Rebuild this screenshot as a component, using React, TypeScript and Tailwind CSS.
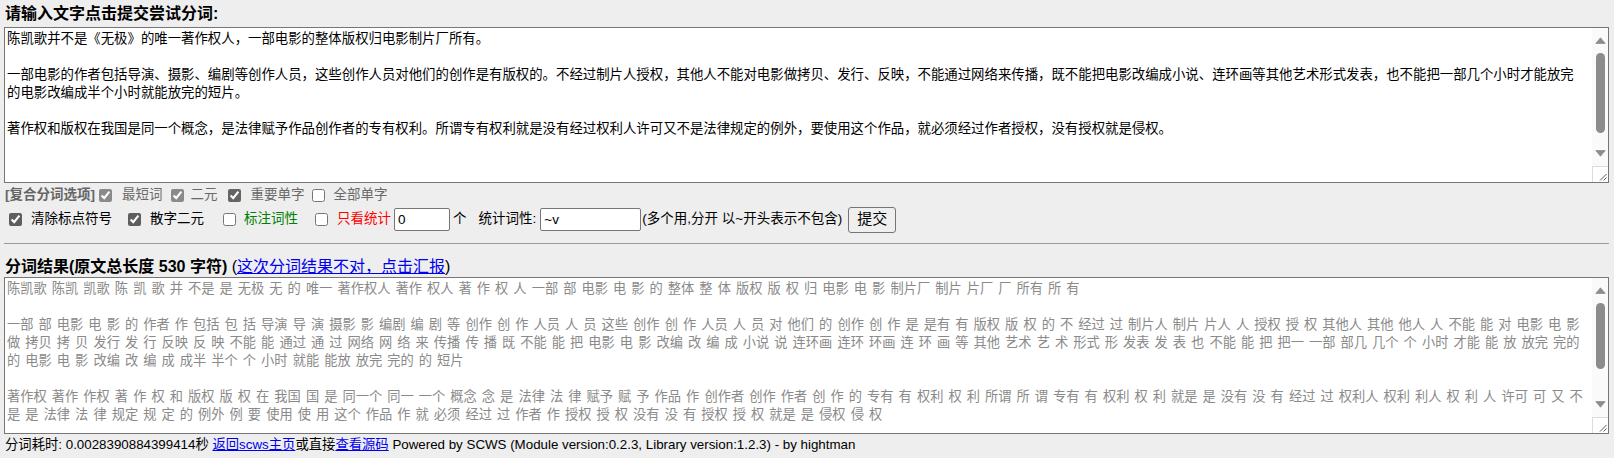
const sourceText =
    '陈凯歌并不是《无极》的唯一著作权人，一部电影的整体版权归电影制片厂所有。\n\n' +
    '一部电影的作者包括导演、摄影、编剧等创作人员，这些创作人员对他们的创作是有版权的。不经过制片人授权，其他人不能对电影做拷贝、发行、反映，不能通过网络来传播，既不能把电影改编成小说、连环画等其他艺术形式发表，也不能把一部几个小时才能放完\n' +
    '的电影改编成半个小时就能放完的短片。\n\n' +
    '著作权和版权在我国是同一个概念，是法律赋予作品创作者的专有权利。所谓专有权利就是没有经过权利人许可又不是法律规定的例外，要使用这个作品，就必须经过作者授权，没有授权就是侵权。';

const resultLines = [
    '陈凯歌 陈凯 凯歌 陈 凯 歌 并 不是 是 无极 无 的 唯一 著作权人 著作 权人 著 作 权 人 一部 部 电影 电 影 的 整体 整 体 版权 版 权 归 电影 电 影 制片厂 制片 片厂 厂 所有 所 有',
    '',
    '一部 部 电影 电 影 的 作者 作 包括 包 括 导演 导 演 摄影 影 编剧 编 剧 等 创作 创 作 人员 人 员 这些 创作 创 作 人员 人 员 对 他们 的 创作 创 作 是 是有 有 版权 版 权 的 不 经过 过 制片人 制片 片人 人 授权 授 权 其他人 其他 他人 人 不能 能 对 电影 电 影',
    '做 拷贝 拷 贝 发行 发 行 反映 反 映 不能 能 通过 通 过 网络 网 络 来 传播 传 播 既 不能 能 把 电影 电 影 改编 改 编 成 小说 说 连环画 连环 环画 连 环 画 等 其他 艺术 艺 术 形式 形 发表 发 表 也 不能 能 把 把一 一部 部几 几个 个 小时 才能 能 放 放完 完的',
    '的 电影 电 影 改编 改 编 成 成半 半个 个 小时 就能 能放 放完 完的 的 短片',
    '',
    '著作权 著作 作权 著 作 权 和 版权 版 权 在 我国 国 是 同一个 同一 一个 概念 念 是 法律 法 律 赋予 赋 予 作品 作 创作者 创作 作者 创 作 的 专有 有 权利 权 利 所谓 所 谓 专有 有 权利 权 利 就是 是 没有 没 有 经过 过 权利人 权利 利人 权 利 人 许可 可 又 不',
    '是 是 法律 法 律 规定 规 定 的 例外 例 要 使用 使 用 这个 作品 作 就 必须 经过 过 作者 作 授权 授 权 没有 没 有 授权 授 权 就是 是 侵权 侵 权',
];

function Arrow({ down }: { down?: boolean }) {
    return (
        <svg width="11" height="7" viewBox="0 0 11 7" className={down ? 'rotate-180' : ''}>
            <path d="M5.5 0.8 L10.2 6.4 L0.8 6.4 Z" fill="#8c8c8c" stroke="#8c8c8c" strokeWidth="0.8" strokeLinejoin="round" />
        </svg>
    );
}

// the page's own scrollbar column (arrows, thumb, resize grip)
function ScrollColumn({ thumb }: { thumb: string }) {
    return (
        <div className="flex w-[16px] shrink-0 flex-col bg-[#fafafa]">
            <div className="flex h-[25px] items-center justify-center">
                <Arrow />
            </div>
            <div className={`mx-auto w-[9px] rounded-full bg-[#8c8c8c] ${thumb}`} />
            <div className="flex-1" />
            <div className="flex h-[25px] items-center justify-center">
                <Arrow down />
            </div>
            <div className="h-[16px] border-t border-l border-[#dcdcdc] bg-white">
                <svg width="15" height="15" viewBox="0 0 15 15">
                    <path d="M13.5 7 L7 13.5 M13.5 10.5 L10.5 13.5" stroke="#5a5a5a" strokeWidth="1" />
                </svg>
            </div>
        </div>
    );
}

function Check({ checked, className }: { checked?: boolean; className?: string }) {
    return (
        <input
            type="checkbox"
            defaultChecked={checked}
            className={`m-0 size-[13px] shrink-0 ${className ?? 'accent-[#646464]'}`}
        />
    );
}

export default function App() {
    return (
        <div className="min-h-screen bg-[#eeeeee] pl-[4px] pr-[5px] font-['Liberation_Sans','Noto_Sans_CJK_SC',sans-serif] text-[13.33px] text-black">
            <h3 className="pl-[1px] text-[16px] font-bold leading-[27px]">
                请输入文字点击提交尝试分词:
            </h3>
            <div className="flex h-[156px] border border-[#767676] bg-white">
                <textarea
                    defaultValue={sourceText}
                    className="min-w-0 flex-1 resize-none overflow-hidden bg-white p-[2px] text-[13.4px] leading-[18px] outline-none"
                />
                <ScrollColumn thumb="h-[80px]" />
            </div>

            <div className="flex h-[25px] items-center text-[13.5px]">
                <span className="ml-[1px] font-bold text-[#666666]">[复合分词选项]</span>
                <Check checked className="ml-[4px] accent-[#8a8a8a]" />
                <span className="ml-[10px] text-[#6a6a6a]">最短词</span>
                <Check checked className="ml-[8px] accent-[#8a8a8a]" />
                <span className="ml-[7px] text-[#6a6a6a]">二元</span>
                <Check checked className="ml-[10px] accent-[#646464]" />
                <span className="ml-[10px] text-[#6a6a6a]">重要单字</span>
                <Check className="ml-[7px]" />
                <span className="ml-[9px] text-[#6a6a6a]">全部单字</span>
            </div>

            <div className="flex h-[23px] items-center text-[13.5px]">
                <Check checked className="ml-[5px] accent-[#5e5e5e]" />
                <span className="ml-[9px]">清除标点符号</span>
                <Check checked className="ml-[16px] accent-[#5e5e5e]" />
                <span className="ml-[9px]">散字二元</span>
                <Check className="ml-[19px]" />
                <span className="ml-[8px] text-[#008000]">标注词性</span>
                <Check className="ml-[17px]" />
                <span className="ml-[9px] text-[#ff0000]">只看统计</span>
                <input
                    defaultValue="0"
                    className="ml-[3px] h-[23px] w-[56px] shrink-0 rounded-[2px] border border-[#767676] bg-white px-[3px] outline-none"
                />
                <span className="ml-[3px]">个</span>
                <span className="ml-[12px]">统计词性:</span>
                <input
                    defaultValue="~v"
                    className="ml-[4px] h-[23px] w-[101px] shrink-0 rounded-[2px] border border-[#767676] bg-white px-[3px] outline-none"
                />
                <span className="ml-[1px]">(多个用,分开 以~开头表示不包含)</span>
                <button
                    type="button"
                    className="ml-[6px] h-[26px] w-[48px] shrink-0 rounded-[3px] border border-[#767676] bg-[#efefef] text-[15px]"
                >
                    提交
                </button>
            </div>

            <hr className="mt-[12px] border-[#9a9a9a]" />

            <div className="mt-[13px] pl-[1px] text-[16px] leading-[20px]">
                <b>分词结果(原文总长度 530 字符)</b> (
                <a href="#" className="text-[#0000ee] underline">
                    这次分词结果不对，点击汇报
                </a>
                )
            </div>

            <div className="flex h-[157px] border border-[#767676] bg-white">
                <textarea
                    readOnly
                    value={resultLines.join('\n')}
                    className="min-w-0 flex-1 resize-none overflow-hidden bg-white p-[2px] text-[13.25px] leading-[18px] text-[#8a8a8a] outline-none [word-spacing:1.35px]"
                />
                <ScrollColumn thumb="h-[66px]" />
            </div>

            <div className="pl-[1px] leading-[22px]">
                分词耗时: 0.0028390884399414秒{' '}
                <a href="#" className="text-[#0000ee] underline">
                    返回scws主页
                </a>
                或直接
                <a href="#" className="text-[#0000ee] underline">
                    查看源码
                </a>{' '}
                Powered by SCWS (Module version:0.2.3, Library version:1.2.3) - by hightman
            </div>
        </div>
    );
}
